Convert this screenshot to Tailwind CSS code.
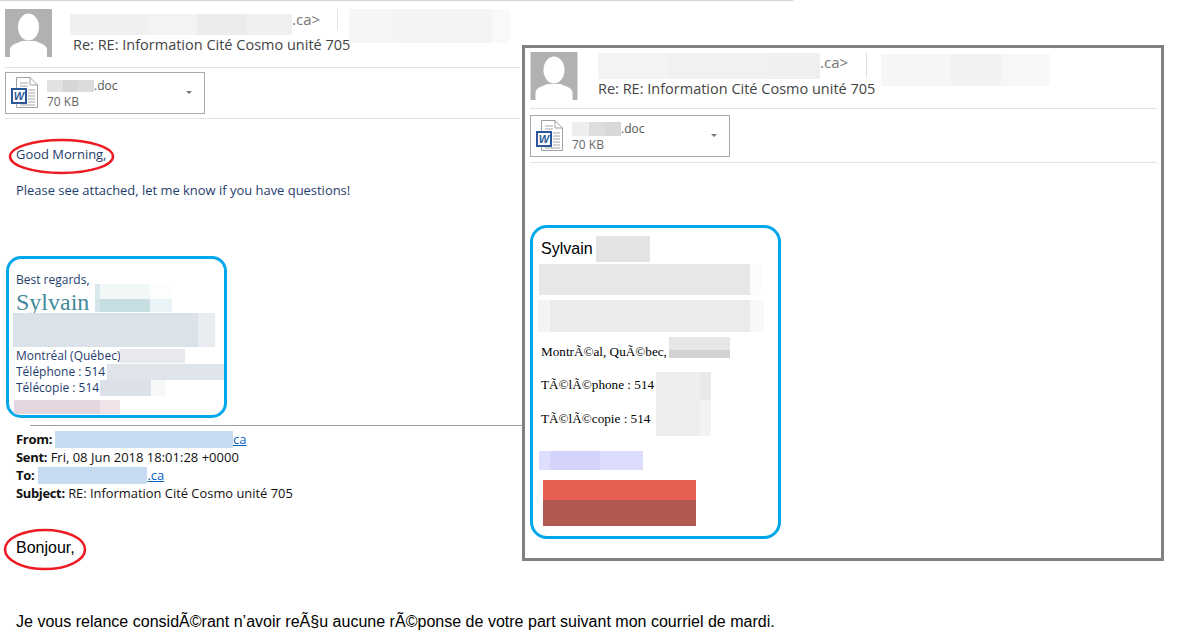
<!DOCTYPE html>
<html lang="en">

<head>
    <meta charset="UTF-8">
    <title>Re: RE: Information Cité Cosmo unité 705</title>
    <script src="https://cdn.jsdelivr.net/npm/@tailwindcss/browser@4"></script>
</head>

<body class="bg-white">
    <div class="relative w-[1182px] h-[642px] overflow-hidden bg-white font-['Open_Sans',sans-serif]">

        <!-- email behind -->
        <div class="w-[793px] border-t border-[#d4d4d4]">
            <!-- header -->
            <div class="flex h-[66px] pl-[5px] pt-[8px]">
                <svg class="w-[47px] h-[48px]" viewBox="0 0 47 48">
                    <rect width="47" height="48" fill="#b1b1b1" />
                    <ellipse cx="23.5" cy="18" rx="10.5" ry="13.5" fill="#fff" />
                    <path d="M5 48V41C5 36 10 35 17 32H30C37 35 42 36 42 41V48Z" fill="#fff" />
                </svg>
                <div class="ml-[18px] w-[450px]">
                    <div class="flex items-start h-[25px]">
                        <div class="flex h-[21px] mt-[5px]">
                            <div class="w-[78px] bg-[#f0f0f0]"></div>
                            <div class="w-[49px] bg-[#f3f3f3]"></div>
                            <div class="w-[49px] bg-[#ececec]"></div>
                            <div class="w-[46px] bg-[#efefef]"></div>
                        </div>
                        <span class="text-[15px] leading-[21px] text-[#777]">.ca&gt;</span>
                        <div class="ml-[17px] w-px h-[21px] bg-[#e2e2e2]"></div>
                        <div class="flex ml-[11px] h-[34px]">
                            <div class="w-[45px] bg-[#f6f6f6]"></div>
                            <div class="w-[98px] bg-[#f4f4f4]"></div>
                            <div class="w-[18px] bg-[#f9f9f9]"></div>
                        </div>
                    </div>
                    <div class="mt-[1px] pl-[3px] text-[14.5px] leading-[20px] text-[#444] whitespace-nowrap">Re: RE: Information Cité Cosmo unité 705</div>
                </div>
            </div>
            <div class="ml-[5px] w-[515px] h-px bg-[#e4e4e4]"></div>

            <!-- attachment -->
            <div class="ml-[5px] mt-[4px] w-[200px] h-[42px] border border-[#ababab] flex items-center pl-[4px] pr-[12px]">
                <svg class="w-[29px] h-[33px]" viewBox="0 0 29 33">
                    <path d="M6.500 .5H20L27.500 8V30.500H6.500Z" fill="#fff" stroke="#a0a0a0" />
                    <path d="M20 .5V8H27.500" fill="none" stroke="#a0a0a0" />
                    <path d="M10 6H18M10 9H18M18 13H25M18 16H25M18 19H25M18 22H25M18 25H25M10 28H25" stroke="#a6a6a6" />
                    <rect x="1" y="11" width="16" height="16" fill="#2b579a" />
                    <rect x="3" y="13" width="12" height="12" fill="#fff" />
                    <text x="9" y="23" text-anchor="middle" font-family="Liberation Sans" font-style="italic" font-weight="700" font-size="11" fill="#2b579a">W</text>
                </svg>
                <div class="ml-[8px] mt-[2px] text-[#666] text-[12px] leading-[16px]">
                    <div class="flex items-center text-[#555]">
                        <div class="flex h-[12px] w-[47px]">
                            <div class="w-[16px] bg-[#e2e2e2]"></div>
                            <div class="w-[15px] bg-[#d6d6d6]"></div>
                            <div class="w-[16px] bg-[#dcdcdc]"></div>
                        </div>.doc
                    </div>
                    <div>70 KB</div>
                </div>
                <div class="ml-auto mb-[2px] w-0 h-0 border-x-[3px] border-x-transparent border-t-[3px] border-t-[#777]"></div>
            </div>
            <div class="ml-[5px] mt-[4px] w-[515px] h-px bg-[#e4e4e4]"></div>

            <!-- message -->
            <div class="relative pl-[16px] pt-[26px] text-[12.95px] leading-[18px] text-[#1f3d6e]">
                <p>Good Morning,</p>
                <p class="mt-[18px]">Please see attached, let me know if you have questions!</p>
                <svg class="absolute left-[8px] top-[19px] w-[107px] h-[37px]" viewBox="0 0 107 37">
                    <ellipse cx="53.500" cy="18.500" rx="51.500" ry="16.500" fill="none" stroke="#ed1c24" stroke-width="2.500" />
                </svg>
            </div>

            <!-- signature -->
            <div class="ml-[6px] mt-[57px] w-[221px] h-[162px] border-[3px] border-[#00a7eb] rounded-[15px] pt-[13px] text-[12px] leading-[16px] text-[#1f3d6e] overflow-hidden">
                <div class="pl-[7px]">Best regards,</div>
                <div class="flex items-end h-[27px] pl-[7px] mt-[1px]">
                    <span class="font-['Liberation_Serif',serif] text-[24px] leading-[27px] text-[#43899a]">Sylvain</span>
                    <div class="ml-[6px] self-start -mt-[5px] w-[77px] h-[28px] grid grid-cols-[5px_50px_22px] grid-rows-[15px_13px]">
                        <div class="bg-[#d9e8ec]"></div>
                        <div class="bg-[#f2f7f8]"></div>
                        <div class="bg-[#fcfdfd]"></div>
                        <div class="bg-[#d4e5e9]"></div>
                        <div class="bg-[#c6dde2]"></div>
                        <div class="bg-[#eaf3f5]"></div>
                    </div>
                </div>
                <div class="flex ml-[4px] -mt-[3px] h-[34px]">
                    <div class="w-[185px] bg-[#dce2ea]"></div>
                    <div class="w-[17px] bg-[#e9ecf1]"></div>
                </div>
                <div class="flex items-center pl-[7px] h-[16px] mt-[1px] whitespace-nowrap">Montréal (Québec)<div class="shrink-0 w-[65px] h-[14px] bg-[#e7e9ef]"></div></div>
                <div class="flex items-center pl-[7px] h-[16px] whitespace-nowrap">Téléphone : 514<div class="shrink-0 ml-[2px] w-[118px] h-[16px] bg-[#dfe3ea]"></div></div>
                <div class="flex items-center pl-[7px] h-[16px] whitespace-nowrap">Télécopie : 514<div class="shrink-0 ml-[1px] w-[51px] h-[16px] bg-[#dce0e8]"></div><div class="shrink-0 w-[15px] h-[16px] bg-[#f7f8fa]"></div></div>
            </div>
            <div class="absolute left-[14px] top-[400px] flex h-[14px]">
                <div class="w-[86px] bg-[#e4d6de]"></div>
                <div class="w-[20px] bg-[#f0e4ea]"></div>
            </div>

            <!-- forwarded header -->
            <div class="ml-[30px] mt-[7px] w-[492px] h-px bg-[#a0a0a0]"></div>
            <div class="pl-[16px] pt-[4px] text-[13px] leading-[18px] text-[#111]">
                <div class="flex items-center"><b class="tracking-[-0.3px]">From:</b><div class="ml-[3px] w-[178px] h-[17px] bg-[#c7dbf0]"></div><span class="text-[#0563c1] underline">ca</span></div>
                <div><b class="tracking-[-0.3px]">Sent:</b> Fri, 08 Jun 2018 18:01:28 +0000</div>
                <div class="flex items-center"><b class="tracking-[-0.3px]">To:</b><div class="ml-[4px] w-[109px] h-[17px] bg-[#c7dbf0]"></div><span class="text-[#0563c1] underline">.ca</span></div>
                <div class="text-[12.9px]"><b class="tracking-[-0.3px]">Subject:</b> RE: Information Cité Cosmo unité 705</div>
            </div>

            <!-- original message -->
            <div class="relative pl-[16px] pt-[37px] font-['Liberation_Sans',sans-serif] text-black">
                <p class="text-[16px] leading-[18px]">Bonjour,</p>
                <p class="mt-[55px] text-[16.05px] leading-[18px] whitespace-nowrap">Je vous relance considÃ©rant n’avoir reÃ§u aucune rÃ©ponse de votre part suivant mon courriel de mardi.</p>
                <svg class="absolute left-[3px] top-[26px] w-[84px] h-[43px]" viewBox="0 0 84 43">
                    <ellipse cx="42" cy="21.500" rx="40" ry="19.500" fill="none" stroke="#ed1c24" stroke-width="2.500" />
                </svg>
            </div>
        </div>

        <!-- zoomed copy on top -->
        <div class="absolute left-[522px] top-[45px] w-[642px] h-[516px] border-[3px] border-[#808080] bg-white">
            <div class="flex h-[60px] pl-[5px] pt-[4px]">
                <svg class="w-[48px] h-[48px]" viewBox="0 0 47 48">
                    <rect width="47" height="48" fill="#b1b1b1" />
                    <ellipse cx="23.500" cy="18" rx="10.500" ry="13.500" fill="#fff" />
                    <path d="M5 48V41C5 36 10 35 17 32H30C37 35 42 36 42 41V48Z" fill="#fff" />
                </svg>
                <div class="ml-[20px]">
                    <div class="flex items-start h-[30px]">
                        <div class="flex h-[26px] mt-[1px]">
                            <div class="w-[70px] bg-[#f3f3f3]"></div>
                            <div class="w-[100px] bg-[#f1f1f1]"></div>
                            <div class="w-[52px] bg-[#efefef]"></div>
                        </div>
                        <span class="text-[15px] leading-[21px] text-[#777]">.ca&gt;</span>
                        <div class="ml-[18px] w-px h-[26px] bg-[#e2e2e2]"></div>
                        <div class="flex ml-[14px] h-[32px] mt-[2px]">
                            <div class="w-[70px] bg-[#f6f6f6]"></div>
                            <div class="w-[50px] bg-[#f2f2f2]"></div>
                            <div class="w-[49px] bg-[#f7f7f7]"></div>
                        </div>
                    </div>
                    <div class="-mt-[3px] text-[14.500px] leading-[20px] text-[#444] whitespace-nowrap">Re: RE: Information Cité Cosmo unité 705</div>
                </div>
            </div>
            <div class="ml-[5px] w-[627px] h-px bg-[#e4e4e4]"></div>

            <div class="ml-[5px] mt-[6px] w-[200px] h-[42px] border border-[#ababab] flex items-center pl-[4px] pr-[12px]">
                <svg class="w-[29px] h-[33px]" viewBox="0 0 29 33">
                    <path d="M6.500 .5H20L27.500 8V30.500H6.500Z" fill="#fff" stroke="#a0a0a0" />
                    <path d="M20 .5V8H27.500" fill="none" stroke="#a0a0a0" />
                    <path d="M10 6H18M10 9H18M18 13H25M18 16H25M18 19H25M18 22H25M18 25H25M10 28H25" stroke="#a6a6a6" />
                    <rect x="1" y="11" width="16" height="16" fill="#2b579a" />
                    <rect x="3" y="13" width="12" height="12" fill="#fff" />
                    <text x="9" y="23" text-anchor="middle" font-family="Liberation Sans" font-style="italic" font-weight="700" font-size="11" fill="#2b579a">W</text>
                </svg>
                <div class="ml-[8px] mt-[2px] text-[#666] text-[12px] leading-[16px]">
                    <div class="flex items-center text-[#555]">
                        <div class="flex h-[14px] w-[49px]">
                            <div class="w-[17px] bg-[#eeeeee]"></div>
                            <div class="w-[16px] bg-[#dddddd]"></div>
                            <div class="w-[16px] bg-[#d8d8d8]"></div>
                        </div>.doc
                    </div>
                    <div>70 KB</div>
                </div>
                <div class="ml-auto mb-[2px] w-0 h-0 border-x-[3px] border-x-transparent border-t-[3px] border-t-[#777]"></div>
            </div>
            <div class="ml-[5px] mt-[5px] w-[627px] h-px bg-[#e4e4e4]"></div>

            <!-- signature -->
            <div class="ml-[5px] mt-[62px] w-[251px] h-[314px] border-[3px] border-[#00a7eb] rounded-[17px] pt-[7px] pl-[6px] overflow-hidden">
                <div class="flex items-center h-[28px] pl-[2px] font-['Liberation_Sans',sans-serif] text-[16px] text-black">Sylvain<div class="ml-[3px] w-[54px] h-[26px] bg-[#e4e4e4]"></div></div>
                <div class="flex mt-[1px] h-[31px]">
                    <div class="w-[211px] bg-[#e7e7e7]"></div>
                    <div class="w-[11px] bg-[#fbfbfb]"></div>
                </div>
                <div class="flex mt-[5px] -ml-[1px] h-[32px]">
                    <div class="w-[12px] bg-[#f4f4f4]"></div>
                    <div class="w-[200px] bg-[#ebebeb]"></div>
                    <div class="w-[14px] bg-[#f8f8f8]"></div>
                </div>
                <div class="font-['Liberation_Serif',serif] text-[13.200px] text-black pl-[2px]">
                    <div class="flex items-start h-[21px] mt-[5px] whitespace-nowrap"><span class="mt-[7px] leading-[16px]">MontrÃ©al, QuÃ©bec,</span><div class="shrink-0 ml-[2px] w-[61px] h-[21px] flex flex-col"><div class="h-[13px] bg-[#e6e6e6]"></div><div class="h-[8px] bg-[#d2d2d2]"></div></div></div>
                    <div class="flex items-start mt-[14px]">
                        <div class="whitespace-nowrap">
                            <div class="leading-[16px] h-[34px] mt-[5px]">TÃ©lÃ©phone : 514</div>
                            <div class="leading-[16px]">TÃ©lÃ©copie : 514</div>
                        </div>
                        <div class="ml-[2px] w-[55px] h-[64px] grid grid-cols-[44px_11px] grid-rows-[28px_36px]">
                            <div class="bg-[#eeeeee]"></div>
                            <div class="bg-[#e9e9e9]"></div>
                            <div class="bg-[#eeeeee]"></div>
                            <div class="bg-[#f3f3f3]"></div>
                        </div>
                    </div>
                </div>
                <div class="flex mt-[15px] h-[19px]">
                    <div class="w-[11px] bg-[#dedeff]"></div>
                    <div class="w-[50px] bg-[#d3d3fb]"></div>
                    <div class="w-[43px] bg-[#dcdcfd]"></div>
                </div>
                <div class="ml-[4px] mt-[10px] w-[153px] h-[46px] flex flex-col">
                    <div class="h-[20px] bg-[#e65f52]"></div>
                    <div class="h-[26px] bg-[#b25a52]"></div>
                </div>
            </div>
        </div>
    </div>
</body>

</html>
